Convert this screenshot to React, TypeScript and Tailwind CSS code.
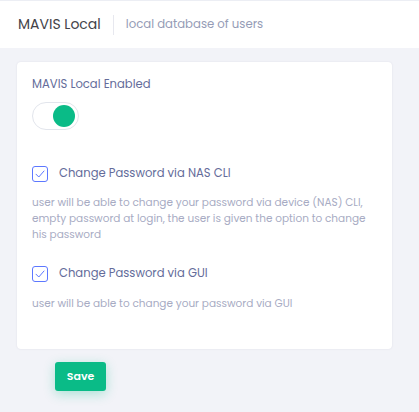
import React from "react";

const font = { fontFamily: "Poppins, 'Open Sans', 'Liberation Sans', sans-serif" };

function Check() {
  return (
    <span className="flex h-[16px] w-[16px] items-center justify-center rounded-[3px] border border-[#5d78ff] bg-white">
      <svg width="10" height="8" viewBox="0 0 10 8" fill="none">
        <path d="M1 4.2 L3.8 7 L9 1" stroke="#5d78ff" strokeWidth="1" strokeLinecap="round" strokeLinejoin="round" />
      </svg>
    </span>
  );
}

export default function App() {
  return (
    <div className="min-h-[412px] w-[419px] bg-[#f2f3f8]" style={font}>
      <div className="h-[1px] bg-[#eceef4]" />
      <div className="flex h-[47px] items-center bg-white pl-[18px]">
        <span className="text-[14px] text-[#434349]">MAVIS Local</span>
        <span className="mx-[12px] h-[20px] w-px bg-[#e7e8ef]" />
        <span className="text-[11.7px] text-[#959cb6]">local database of users</span>
      </div>
      <div className="ml-[17px] mt-[14px] w-[375px] rounded-[4px] bg-white px-[15px] pb-[37px] pt-[14px] shadow-[0_0_2px_rgba(82,63,105,0.12)]">
        <div className="text-[11.6px] leading-[16px] text-[#646c9a]">MAVIS Local Enabled</div>
        <div className="mt-[10px] flex h-[28px] w-[47px] items-center justify-end rounded-full border border-[#e2e5ec] bg-white pr-[3px]">
          <span className="h-[22px] w-[22px] rounded-full bg-[#0abb87]" />
        </div>
        <div className="mt-[35px] flex items-center gap-[11px]">
          <Check />
          <span className="text-[11.6px] text-[#646c9a]">Change Password via NAS CLI</span>
        </div>
        <div className="mt-[13px] text-[10.5px] leading-[16px] text-[#a7abc3]">
          user will be able to change your password via device (NAS) CLI, empty password at login, the user is given the option to change his password
        </div>
        <div className="mt-[22px] flex items-center gap-[11px]">
          <Check />
          <span className="text-[11.6px] text-[#646c9a]">Change Password via GUI</span>
        </div>
        <div className="mt-[13px] text-[10.5px] leading-[16px] text-[#a7abc3]">
          user will be able to change your password via GUI
        </div>
      </div>
      <button className="ml-[55px] mt-[13px] h-[29px] w-[51px] rounded-[3px] bg-[#0abb87] text-[11px] font-semibold text-white shadow-[0_3px_12px_rgba(10,187,135,0.3)]">
        Save
      </button>
    </div>
  );
}
